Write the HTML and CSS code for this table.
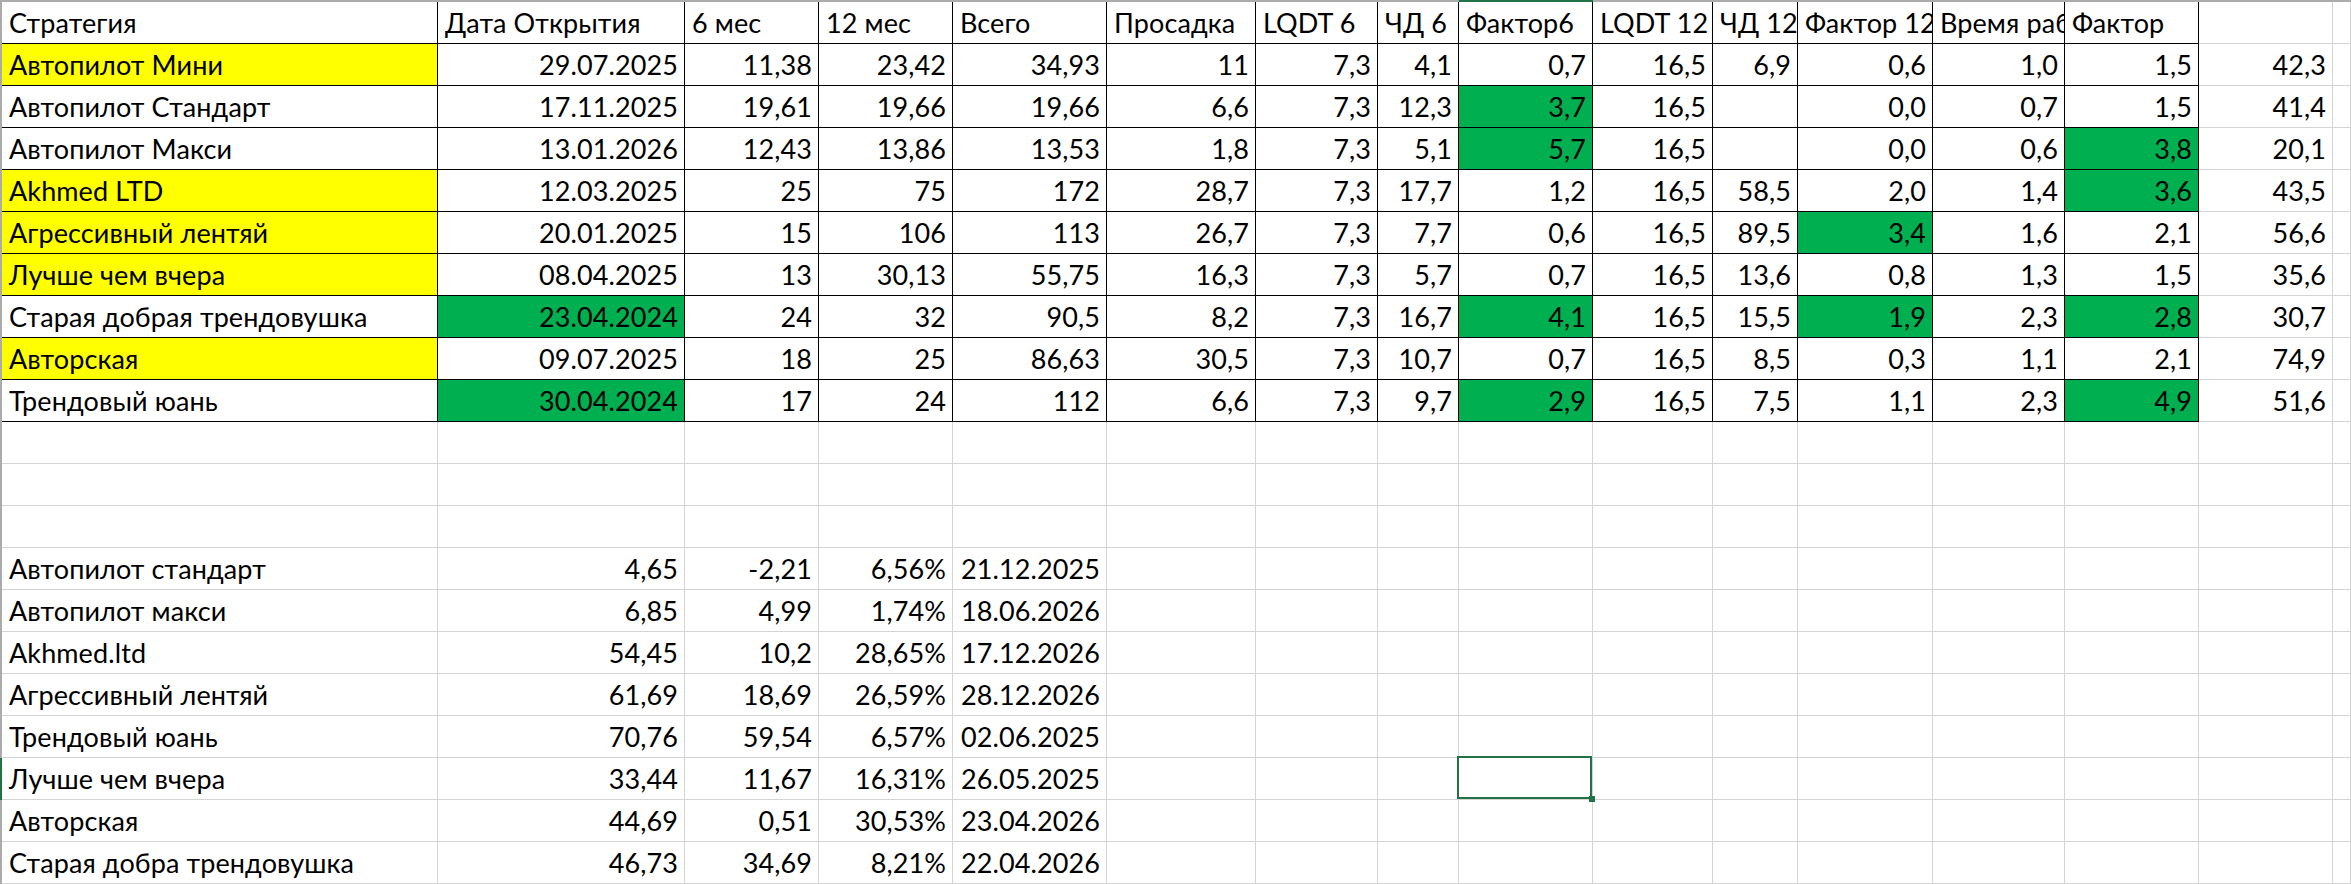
FILE: index.html
```html
<!DOCTYPE html>
<html lang="ru">
<head>
<meta charset="utf-8">
<title>Стратегии</title>
<link rel="stylesheet" href="styles.css">
</head>
<body>
<div class="sheet">
  <div class="row"><i class="eh"></i><i class="eh"></i><i class="eh"></i><i class="eh"></i><i class="eh"></i><i class="eh"></i><i class="eh"></i><i class="eh"></i><i class="eh"></i><i class="eh mark"></i><i class="eh"></i><i class="eh"></i><i class="eh"></i><i class="eh"></i><i class="eh"></i><i class="eh"></i><i class="eh"></i></div>

  <div class="row"><i class="ev"></i><div class="c b">Стратегия</div><div class="c b">Дата Открытия</div><div class="c b">6 мес</div><div class="c b">12 мес</div><div class="c b">Всего</div><div class="c b">Просадка</div><div class="c b">LQDT 6</div><div class="c b">ЧД 6</div><div class="c b">Фактор6</div><div class="c b">LQDT 12</div><div class="c b">ЧД 12</div><div class="c b">Фактор 12</div><div class="c b">Время работы</div><div class="c b">Фактор</div><div class="c"></div><div class="c"></div></div>

  <div class="row"><i class="ev"></i><div class="c b y">Автопилот Мини</div><div class="c b n">29.07.2025</div><div class="c b n">11,38</div><div class="c b n">23,42</div><div class="c b n">34,93</div><div class="c b n">11</div><div class="c b n">7,3</div><div class="c b n">4,1</div><div class="c b n">0,7</div><div class="c b n">16,5</div><div class="c b n">6,9</div><div class="c b n">0,6</div><div class="c b n">1,0</div><div class="c b n">1,5</div><div class="c n">42,3</div><div class="c"></div></div>

  <div class="row"><i class="ev"></i><div class="c b">Автопилот Стандарт</div><div class="c b n">17.11.2025</div><div class="c b n">19,61</div><div class="c b n">19,66</div><div class="c b n">19,66</div><div class="c b n">6,6</div><div class="c b n">7,3</div><div class="c b n">12,3</div><div class="c b n g">3,7</div><div class="c b n">16,5</div><div class="c b n"></div><div class="c b n">0,0</div><div class="c b n">0,7</div><div class="c b n">1,5</div><div class="c n">41,4</div><div class="c"></div></div>

  <div class="row"><i class="ev"></i><div class="c b">Автопилот Макси</div><div class="c b n">13.01.2026</div><div class="c b n">12,43</div><div class="c b n">13,86</div><div class="c b n">13,53</div><div class="c b n">1,8</div><div class="c b n">7,3</div><div class="c b n">5,1</div><div class="c b n g">5,7</div><div class="c b n">16,5</div><div class="c b n"></div><div class="c b n">0,0</div><div class="c b n">0,6</div><div class="c b n g">3,8</div><div class="c n">20,1</div><div class="c"></div></div>

  <div class="row"><i class="ev"></i><div class="c b y">Akhmed LTD</div><div class="c b n">12.03.2025</div><div class="c b n">25</div><div class="c b n">75</div><div class="c b n">172</div><div class="c b n">28,7</div><div class="c b n">7,3</div><div class="c b n">17,7</div><div class="c b n">1,2</div><div class="c b n">16,5</div><div class="c b n">58,5</div><div class="c b n">2,0</div><div class="c b n">1,4</div><div class="c b n g">3,6</div><div class="c n">43,5</div><div class="c"></div></div>

  <div class="row"><i class="ev"></i><div class="c b y">Агрессивный лентяй</div><div class="c b n">20.01.2025</div><div class="c b n">15</div><div class="c b n">106</div><div class="c b n">113</div><div class="c b n">26,7</div><div class="c b n">7,3</div><div class="c b n">7,7</div><div class="c b n">0,6</div><div class="c b n">16,5</div><div class="c b n">89,5</div><div class="c b n g">3,4</div><div class="c b n">1,6</div><div class="c b n">2,1</div><div class="c n">56,6</div><div class="c"></div></div>

  <div class="row"><i class="ev"></i><div class="c b y">Лучше чем вчера</div><div class="c b n">08.04.2025</div><div class="c b n">13</div><div class="c b n">30,13</div><div class="c b n">55,75</div><div class="c b n">16,3</div><div class="c b n">7,3</div><div class="c b n">5,7</div><div class="c b n">0,7</div><div class="c b n">16,5</div><div class="c b n">13,6</div><div class="c b n">0,8</div><div class="c b n">1,3</div><div class="c b n">1,5</div><div class="c n">35,6</div><div class="c"></div></div>

  <div class="row"><i class="ev"></i><div class="c b">Старая добрая трендовушка</div><div class="c b n g">23.04.2024</div><div class="c b n">24</div><div class="c b n">32</div><div class="c b n">90,5</div><div class="c b n">8,2</div><div class="c b n">7,3</div><div class="c b n">16,7</div><div class="c b n g">4,1</div><div class="c b n">16,5</div><div class="c b n">15,5</div><div class="c b n g">1,9</div><div class="c b n">2,3</div><div class="c b n g">2,8</div><div class="c n">30,7</div><div class="c"></div></div>

  <div class="row"><i class="ev"></i><div class="c b y">Авторская</div><div class="c b n">09.07.2025</div><div class="c b n">18</div><div class="c b n">25</div><div class="c b n">86,63</div><div class="c b n">30,5</div><div class="c b n">7,3</div><div class="c b n">10,7</div><div class="c b n">0,7</div><div class="c b n">16,5</div><div class="c b n">8,5</div><div class="c b n">0,3</div><div class="c b n">1,1</div><div class="c b n">2,1</div><div class="c n">74,9</div><div class="c"></div></div>

  <div class="row"><i class="ev"></i><div class="c b">Трендовый юань</div><div class="c b n g">30.04.2024</div><div class="c b n">17</div><div class="c b n">24</div><div class="c b n">112</div><div class="c b n">6,6</div><div class="c b n">7,3</div><div class="c b n">9,7</div><div class="c b n g">2,9</div><div class="c b n">16,5</div><div class="c b n">7,5</div><div class="c b n">1,1</div><div class="c b n">2,3</div><div class="c b n g">4,9</div><div class="c n">51,6</div><div class="c"></div></div>

  <div class="row"><i class="ev"></i><div class="c"></div><div class="c"></div><div class="c"></div><div class="c"></div><div class="c"></div><div class="c"></div><div class="c"></div><div class="c"></div><div class="c"></div><div class="c"></div><div class="c"></div><div class="c"></div><div class="c"></div><div class="c"></div><div class="c"></div><div class="c"></div></div>
  <div class="row"><i class="ev"></i><div class="c"></div><div class="c"></div><div class="c"></div><div class="c"></div><div class="c"></div><div class="c"></div><div class="c"></div><div class="c"></div><div class="c"></div><div class="c"></div><div class="c"></div><div class="c"></div><div class="c"></div><div class="c"></div><div class="c"></div><div class="c"></div></div>
  <div class="row"><i class="ev"></i><div class="c"></div><div class="c"></div><div class="c"></div><div class="c"></div><div class="c"></div><div class="c"></div><div class="c"></div><div class="c"></div><div class="c"></div><div class="c"></div><div class="c"></div><div class="c"></div><div class="c"></div><div class="c"></div><div class="c"></div><div class="c"></div></div>

  <div class="row"><i class="ev"></i><div class="c">Автопилот стандарт</div><div class="c n">4,65</div><div class="c n">-2,21</div><div class="c n">6,56%</div><div class="c n">21.12.2025</div><div class="c"></div><div class="c"></div><div class="c"></div><div class="c"></div><div class="c"></div><div class="c"></div><div class="c"></div><div class="c"></div><div class="c"></div><div class="c"></div><div class="c"></div></div>
  <div class="row"><i class="ev"></i><div class="c">Автопилот макси</div><div class="c n">6,85</div><div class="c n">4,99</div><div class="c n">1,74%</div><div class="c n">18.06.2026</div><div class="c"></div><div class="c"></div><div class="c"></div><div class="c"></div><div class="c"></div><div class="c"></div><div class="c"></div><div class="c"></div><div class="c"></div><div class="c"></div><div class="c"></div></div>
  <div class="row"><i class="ev"></i><div class="c">Akhmed.ltd</div><div class="c n">54,45</div><div class="c n">10,2</div><div class="c n">28,65%</div><div class="c n">17.12.2026</div><div class="c"></div><div class="c"></div><div class="c"></div><div class="c"></div><div class="c"></div><div class="c"></div><div class="c"></div><div class="c"></div><div class="c"></div><div class="c"></div><div class="c"></div></div>
  <div class="row"><i class="ev"></i><div class="c">Агрессивный лентяй</div><div class="c n">61,69</div><div class="c n">18,69</div><div class="c n">26,59%</div><div class="c n">28.12.2026</div><div class="c"></div><div class="c"></div><div class="c"></div><div class="c"></div><div class="c"></div><div class="c"></div><div class="c"></div><div class="c"></div><div class="c"></div><div class="c"></div><div class="c"></div></div>
  <div class="row"><i class="ev"></i><div class="c">Трендовый юань</div><div class="c n">70,76</div><div class="c n">59,54</div><div class="c n">6,57%</div><div class="c n">02.06.2025</div><div class="c"></div><div class="c"></div><div class="c"></div><div class="c"></div><div class="c"></div><div class="c"></div><div class="c"></div><div class="c"></div><div class="c"></div><div class="c"></div><div class="c"></div></div>
  <div class="row"><i class="ev mark"></i><div class="c">Лучше чем вчера</div><div class="c n">33,44</div><div class="c n">11,67</div><div class="c n">16,31%</div><div class="c n">26.05.2025</div><div class="c"></div><div class="c"></div><div class="c"></div><div class="c sel"></div><div class="c"></div><div class="c"></div><div class="c"></div><div class="c"></div><div class="c"></div><div class="c"></div><div class="c"></div></div>
  <div class="row"><i class="ev"></i><div class="c">Авторская</div><div class="c n">44,69</div><div class="c n">0,51</div><div class="c n">30,53%</div><div class="c n">23.04.2026</div><div class="c"></div><div class="c"></div><div class="c"></div><div class="c"></div><div class="c"></div><div class="c"></div><div class="c"></div><div class="c"></div><div class="c"></div><div class="c"></div><div class="c"></div></div>
  <div class="row"><i class="ev"></i><div class="c">Старая добра трендовушка</div><div class="c n">46,73</div><div class="c n">34,69</div><div class="c n">8,21%</div><div class="c n">22.04.2026</div><div class="c"></div><div class="c"></div><div class="c"></div><div class="c"></div><div class="c"></div><div class="c"></div><div class="c"></div><div class="c"></div><div class="c"></div><div class="c"></div><div class="c"></div></div>
</div>
</body>
</html>
```

FILE: styles.css
```css
* { box-sizing: border-box; }
html, body { margin: 0; padding: 0; background: #fff; }
body {
  font-family: Lato, "Open Sans", "Liberation Sans", sans-serif;
  font-size: 27px;
  letter-spacing: 0.1px;
  color: #000;
  overflow: hidden;
}
.sheet {
  display: grid;
  grid-template-columns: 2px 436px 247px 134px 134px 154px 149px 122px 81px 134px 120px 85px 135px 132px 134px 134px 18px;
  grid-template-rows: 2px;
  grid-auto-rows: 42px;
  width: 2351px;
}
.row { display: contents; }
.eh, .ev { display: block; background: #ababab; }
.mark { background: #217346; }
.c {
  display: flex;
  align-items: flex-end;
  padding: 0 6px 7px 7px;
  border-right: 1px solid #d4d4d4;
  border-bottom: 1px solid #d4d4d4;
  white-space: nowrap;
  overflow: hidden;
  line-height: 1;
}
.n { justify-content: flex-end; }
.b { border-right-color: #000; border-bottom-color: #000; }
.y { background: #ffff00; }
.g { background: #00b050; }
.sel { position: relative; overflow: visible; }
.sel::after {
  content: "";
  position: absolute;
  left: -2px;
  top: -2px;
  right: 0;
  bottom: 0;
  border: 2px solid #217346;
}
.sel::before {
  content: "";
  position: absolute;
  right: -3px;
  bottom: -3px;
  width: 6px;
  height: 6px;
  background: #217346;
  z-index: 1;
}
```
